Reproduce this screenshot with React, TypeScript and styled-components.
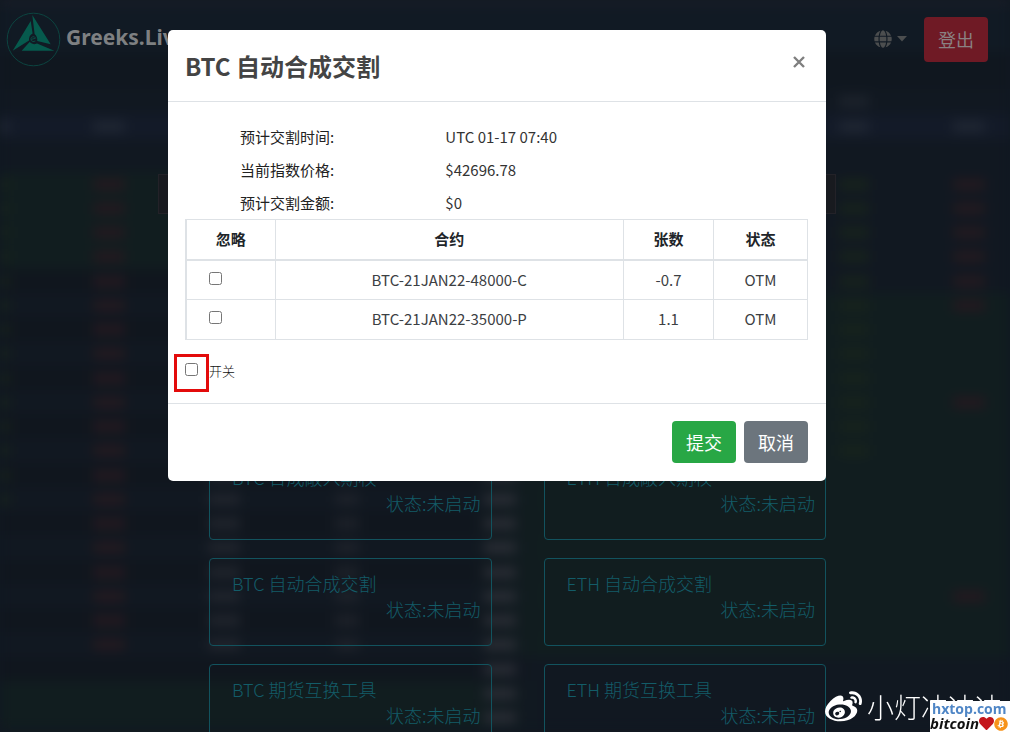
import React from 'react';
import styled, { createGlobalStyle, css } from 'styled-components';
import { FaGlobe, FaWeibo, FaHeart, FaBitcoin } from 'react-icons/fa';

const GlobalStyle = createGlobalStyle`
  *, *::before, *::after { box-sizing: border-box; }
  body {
    margin: 0;
    background: #111821;
    color: #212529;
    font-family: "Noto Sans CJK SC", "Noto Sans", sans-serif;
    font-size: 15px;
  }
  button, input { font-family: inherit; }
`;

const Page = styled.div`
  position: relative;
  height: 100vh;
  overflow: hidden;
`;

/* Blurred option chain behind the page */
const Backdrop = styled.div`
  position: absolute;
  inset: 0;
  display: flex;
  flex-direction: column;
  overflow: hidden;
  filter: blur(6px);
`;

const Band = styled.div<{ $height: number; $color: string }>`
  flex: none;
  height: ${p => p.$height}px;
  background: ${p => p.$color};
`;

const ChainRow = styled.div<{ $left: string; $right: string; $height: number }>`
  flex: 0 0 ${p => p.$height}px;
  display: grid;
  grid-template-columns: 10px 83fr 32px 83fr 32px 95fr 24px 125fr 32px 323fr 30px 84fr 32px 25fr;
  align-items: center;
  background: linear-gradient(90deg, ${p => p.$left} 46%, ${p => p.$right} 54%);
`;

const Smear = styled.span<{ $column: number; $color: string }>`
  grid-column: ${p => p.$column};
  grid-row: 1;
  height: 11px;
  background: ${p => p.$color};
`;

const Nav = styled.header`
  position: relative;
  display: flex;
  align-items: center;
  justify-content: space-between;
  height: 78px;
  padding: 0 22px 0 6px;
`;

const Brand = styled.a`
  display: flex;
  align-items: center;
  gap: 5px;
  color: #7e8082;
  text-decoration: none;
`;

const BrandName = styled.span`
  padding-bottom: 4px;
  font-family: "Noto Sans", sans-serif;
  font-size: 21px;
  font-weight: 700;
`;

const NavActions = styled.div`
  display: flex;
  align-items: center;
  gap: 17px;
`;

const LanguageButton = styled.button`
  display: flex;
  align-items: center;
  gap: 5px;
  padding: 0;
  border: 0;
  background: none;
  color: #4c4e4f;
  font-size: 18px;
`;

const Button = styled.button<{ $tone: 'danger' | 'success' | 'secondary' }>`
  height: 42px;
  padding: 0 14px;
  border: 0;
  border-radius: 4px;
  color: #fff;
  font-size: 18px;
  ${p => p.$tone === 'danger' && css`height: 45px; background: #6f1a25; color: #8a8182;`}
  ${p => p.$tone === 'success' && css`background: #28a745;`}
  ${p => p.$tone === 'secondary' && css`background: #6c757d;`}
`;

const NoticeRow = styled.div`
  position: relative;
  padding: 96px 16px 0 0;
`;

const Notice = styled.div`
  height: 40px;
  max-width: 678px;
  margin: 0 auto;
  border: 1px solid #232228;
  background: #181a1f;
`;

const Tools = styled.main`
  position: relative;
  display: grid;
  grid-template-columns: 1fr 1fr;
  gap: 18px 52px;
  max-width: 642px;
  margin: 238px auto 0;
  padding-left: 25px;
`;

const ToolCard = styled.a`
  display: block;
  height: 88px;
  padding: 11px 10px 0 22px;
  border: 1px solid #12535e;
  border-radius: 4px;
  color: #135c68;
  font-size: 18px;
  font-weight: 300;
  line-height: 26px;
  text-decoration: none;
`;

const ToolState = styled.div`
  text-align: right;
`;

const ModalLayer = styled.div`
  position: fixed;
  inset: 0;
  padding: 30px 16px 0 0;
`;

const Dialog = styled.section`
  max-width: 658px;
  margin: 0 auto;
  border-radius: 5px;
  background: #fff;
`;

const DialogHeader = styled.div`
  display: flex;
  align-items: flex-start;
  justify-content: space-between;
  height: 72px;
  padding: 18px 17px;
  border-bottom: 1px solid #dee2e6;
`;

const DialogTitle = styled.h2`
  margin: 0;
  color: #444;
  font-size: 24px;
  line-height: 36px;
`;

const CloseButton = styled.button`
  display: flex;
  padding: 8px 4px;
  border: 0;
  background: none;
  color: #7f7f7f;
`;

const DialogBody = styled.div`
  padding: 18px 18px 11px 17px;
  border-bottom: 1px solid #dee2e6;
`;

const Facts = styled.dl`
  display: grid;
  grid-template-columns: 1fr 2fr;
  column-gap: 24px;
  margin: 0;
  padding-left: 55px;
  color: #222;
  line-height: 33px;
`;

const FactValue = styled.dd`
  margin: 0;
  color: #333;
`;

const Contracts = styled.table`
  width: 100%;
  border-collapse: collapse;
  text-align: center;
  line-height: 22px;
  th, td {
    padding: 8px;
    border: 1px solid #dee2e6;
  }
  th { height: 40px; }
  td {
    height: 40px;
    color: #3c4043;
  }
  tbody tr:first-child td { height: 39px; }
  th:first-child, td:first-child { border-left-width: 2px; }
  thead th { border-bottom-width: 2px; }
`;

const Check = styled.input`
  display: block;
  width: 13px;
  height: 13px;
  margin: 0;
`;

const SkipCell = styled.td`
  vertical-align: top;
  ${Check} { margin: 3px 0 0 14px; }
`;

const SwitchRow = styled.div`
  display: flex;
  height: 38px;
  margin: 14px 0 0 -11px;
`;

const Highlight = styled.div`
  width: 35px;
  height: 38px;
  padding: 6px 8px;
  border: 3px solid #e30b0b;
`;

const SwitchLabel = styled.label`
  color: #111;
  font-size: 13px;
  font-weight: 300;
  line-height: 34px;
`;

const DialogFooter = styled.div`
  display: flex;
  justify-content: flex-end;
  gap: 8px;
  padding: 17px 18px 18px;
`;

const Watermark = styled.div`
  position: absolute;
  right: 8px;
  bottom: 5px;
  display: flex;
  align-items: center;
  gap: 5px;
  color: #fff;
  font-size: 27px;
  font-weight: 300;
  line-height: 40px;
`;

const SiteBadge = styled.div`
  position: absolute;
  right: 0;
  bottom: 0;
  width: 80px;
  height: 31px;
  background: #fff;
  font-family: "Open Sans", sans-serif;
  font-weight: 700;
`;

const SiteName = styled.div`
  padding-left: 2px;
  color: #4f86c6;
  font-size: 14px;
  line-height: 15px;
`;

const SiteTopic = styled.div`
  display: flex;
  align-items: center;
  color: #111;
  font-size: 15px;
  font-style: italic;
  line-height: 15px;
`;

const NAVY = '#111821';
const GREEN = '#111d1f';
const RED_MARK = '#24191f';
const GREEN_MARK = '#17231c';
const GREY_MARK = '#2a2d35';

const chain = Array.from({ length: 23 }, (_, i) => ({
  height: i % 4 === 3 ? 25 : 24,
  left: i < 4 || i > 20 ? GREEN : i % 2 ? NAVY : '#10161e',
  right: i > 4 && i < 20 ? GREEN : NAVY,
  marks: [
    ...(i < 14 ? [[1, GREEN_MARK]] : []),
    ...(i < 20 ? [[3, RED_MARK]] : []),
    ...(i > 11 && i < 20 ? [[5, '#21252d'], [7, '#1e222a']] : []),
    ...(i > 11 ? [[9, GREY_MARK]] : []),
    ...(i < 12 ? [[11, GREEN_MARK]] : []),
    ...([0, 1, 2, 3, 4, 5, 9, 17].includes(i) ? [[13, RED_MARK]] : []),
  ] as [number, string][],
}));

function OptionChain() {
  return (
    <Backdrop aria-hidden="true">
      <Band $height={4} $color="#20212c" />
      <Band $height={48} $color="#111a24" />
      <Band $height={37} $color="#10171f" />
      <ChainRow $left={NAVY} $right={NAVY} $height={25}>
        <Smear $column={11} $color="#1d232c" />
      </ChainRow>
      <ChainRow $left="#131a28" $right="#131a28" $height={25}>
        <Smear $column={1} $color="#202733" />
        <Smear $column={3} $color="#202733" />
        <Smear $column={11} $color="#202733" />
        <Smear $column={13} $color="#202733" />
      </ChainRow>
      <Band $height={33} $color={NAVY} />
      {chain.map((row, i) => (
        <ChainRow key={i} $left={row.left} $right={row.right} $height={row.height}>
          {row.marks.map(([column, color]) => (
            <Smear key={column} $column={column} $color={color} />
          ))}
        </ChainRow>
      ))}
    </Backdrop>
  );
}

function Logo() {
  return (
    <svg width="55" height="55" viewBox="0 0 55 55" aria-hidden="true">
      <circle cx="27.5" cy="27.5" r="26.3" fill="none" stroke="#0c4440" strokeWidth="1" />
      <g fill="#065a4d">
        <path d="M24.7 9 L6.7 38.7 L23 28.5 Q22.6 23.5 26.6 21.5 Z" />
        <path d="M26.3 3 L44.7 32.3 L31.2 29 Q31.8 25 28.6 22 Z" />
        <path d="M23.6 30 L15.7 38.7 L48.3 38.7 L31 31.4 Q27 33.4 23.6 30 Z" />
      </g>
      <path
        d="M25.2 27.4 L29.6 26.2 Q28.6 24 26.4 24.8 Q24.2 26 25.2 28.4 Q26.6 30.6 29.4 29"
        fill="none"
        stroke="#0b4a43"
        strokeWidth="1"
      />
    </svg>
  );
}

const tools = ['合成敲入期权', '自动合成交割', '期货互换工具'];
const facts = [
  ['预计交割时间:', 'UTC 01-17 07:40'],
  ['当前指数价格:', '$42696.78'],
  ['预计交割金额:', '$0'],
];
const contracts = [
  { name: 'BTC-21JAN22-48000-C', size: '-0.7', state: 'OTM' },
  { name: 'BTC-21JAN22-35000-P', size: '1.1', state: 'OTM' },
];

function SettlementDialog() {
  return (
    <ModalLayer>
      <Dialog role="dialog" aria-modal="true" aria-labelledby="dialog-title">
        <DialogHeader>
          <DialogTitle id="dialog-title">BTC 自动合成交割</DialogTitle>
          <CloseButton type="button" aria-label="关闭">
            <svg width="12" height="12" viewBox="0 0 12 12" stroke="currentColor" strokeWidth="2.4">
              <path d="M1 1 L11 11 M11 1 L1 11" />
            </svg>
          </CloseButton>
        </DialogHeader>
        <DialogBody>
          <Facts>
            {facts.map(([label, value]) => (
              <React.Fragment key={label}>
                <dt>{label}</dt>
                <FactValue>{value}</FactValue>
              </React.Fragment>
            ))}
          </Facts>
          <Contracts>
            <colgroup>
              <col width="89" />
              <col />
              <col width="90" />
              <col width="94" />
            </colgroup>
            <thead>
              <tr>
                <th>忽略</th>
                <th>合约</th>
                <th>张数</th>
                <th>状态</th>
              </tr>
            </thead>
            <tbody>
              {contracts.map(c => (
                <tr key={c.name}>
                  <SkipCell>
                    <Check type="checkbox" aria-label={c.name} />
                  </SkipCell>
                  <td>{c.name}</td>
                  <td>{c.size}</td>
                  <td>{c.state}</td>
                </tr>
              ))}
            </tbody>
          </Contracts>
          <SwitchRow>
            <Highlight>
              <Check type="checkbox" id="switch" />
            </Highlight>
            <SwitchLabel htmlFor="switch">开关</SwitchLabel>
          </SwitchRow>
        </DialogBody>
        <DialogFooter>
          <Button type="button" $tone="success">提交</Button>
          <Button type="button" $tone="secondary">取消</Button>
        </DialogFooter>
      </Dialog>
    </ModalLayer>
  );
}

export default function App() {
  return (
    <Page>
      <GlobalStyle />
      <OptionChain />
      <Nav>
        <Brand href="#">
          <Logo />
          <BrandName>Greeks.Live</BrandName>
        </Brand>
        <NavActions>
          <LanguageButton type="button" aria-label="语言">
            <FaGlobe />
            <svg width="10" height="6" viewBox="0 0 10 6" fill="currentColor" aria-hidden="true">
              <path d="M0 0 H10 L5 5.4 Z" />
            </svg>
          </LanguageButton>
          <Button type="button" $tone="danger">登出</Button>
        </NavActions>
      </Nav>
      <NoticeRow>
        <Notice />
      </NoticeRow>
      <Tools>
        {tools.flatMap(tool =>
          ['BTC', 'ETH'].map(coin => (
            <ToolCard href="#" key={coin + tool}>
              {coin} {tool}
              <ToolState>状态:未启动</ToolState>
            </ToolCard>
          )),
        )}
      </Tools>
      <SettlementDialog />
      <Watermark>
        <FaWeibo size={37} />
        小灯冲冲冲
      </Watermark>
      <SiteBadge>
        <SiteName>hxtop.com</SiteName>
        <SiteTopic>
          bitcoin
          <FaHeart size={15} color="#c4161c" />
          <FaBitcoin size={14} color="#f7931a" />
        </SiteTopic>
      </SiteBadge>
    </Page>
  );
}
